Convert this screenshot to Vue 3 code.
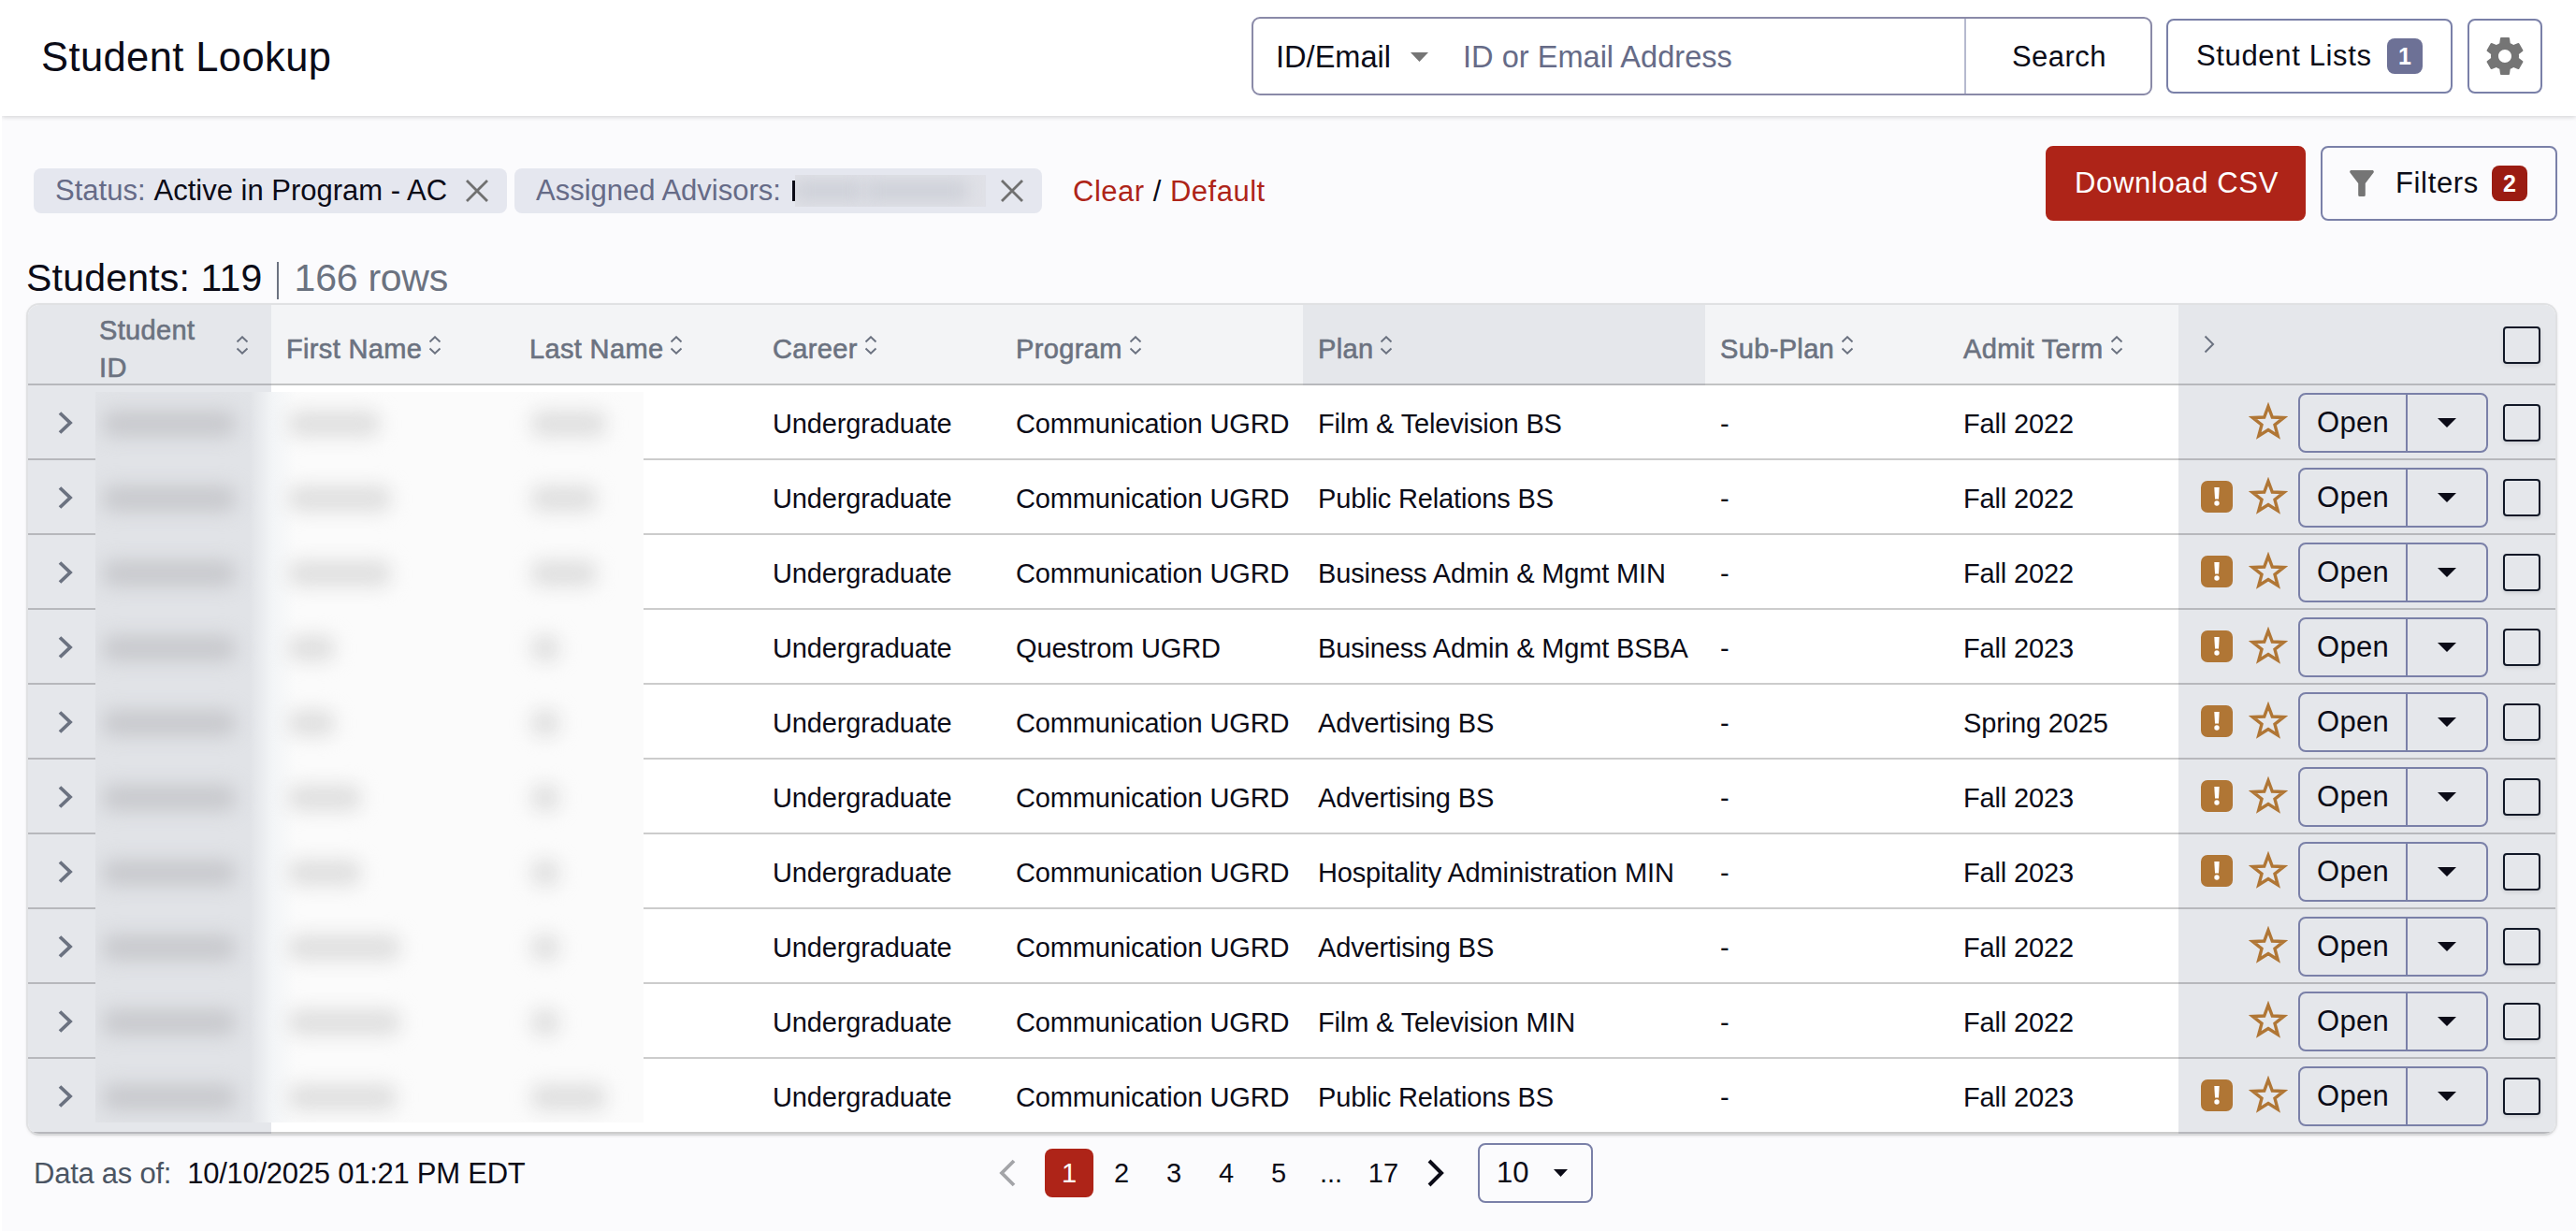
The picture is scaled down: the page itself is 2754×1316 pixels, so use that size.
<script setup>
const columns = [
  { key: 'career', label: 'Career' },
  { key: 'program', label: 'Program' },
  { key: 'plan', label: 'Plan', active: true },
  { key: 'subPlan', label: 'Sub-Plan' },
  { key: 'term', label: 'Admit Term' },
]

const row = (program, plan, term, alert, first, last) => ({
  career: 'Undergraduate', program, plan, subPlan: '-', term, alert, first, last,
})

const COM = 'Communication UGRD'
const rows = [
  row(COM, 'Film & Television BS', 'Fall 2022', false, 98, 80),
  row(COM, 'Public Relations BS', 'Fall 2022', true, 110, 70),
  row(COM, 'Business Admin & Mgmt MIN', 'Fall 2022', true, 110, 70),
  row('Questrom UGRD', 'Business Admin & Mgmt BSBA', 'Fall 2023', true, 50, 30),
  row(COM, 'Advertising BS', 'Spring 2025', true, 50, 30),
  row(COM, 'Advertising BS', 'Fall 2023', true, 78, 30),
  row(COM, 'Hospitality Administration MIN', 'Fall 2023', true, 78, 30),
  row(COM, 'Advertising BS', 'Fall 2022', false, 120, 30),
  row(COM, 'Film & Television MIN', 'Fall 2022', false, 120, 30),
  row(COM, 'Public Relations BS', 'Fall 2023', true, 116, 80),
]

const pages = ['1', '2', '3', '4', '5', '...', '17']
</script>

<template>
  <div class="page">
    <header class="topbar">
      <h1>Student Lookup</h1>
      <div class="search">
        <div class="kind">ID/Email<svg class="tri" width="19" height="10" viewBox="0 0 19 10"><path d="M0 0H19L9.5 10Z" fill="#757575" /></svg></div>
        <div class="field">ID or Email Address</div>
        <div class="go">Search</div>
      </div>
      <button class="btn lists">Student Lists<span class="badge slate">1</span></button>
      <button class="btn gear">
        <svg width="48" height="48" viewBox="0 0 24 24" fill="#757575"><path d="M19.43 12.98c.04-.32.07-.64.07-.98s-.03-.66-.07-.98l2.11-1.65c.19-.15.24-.42.12-.64l-2-3.46c-.12-.22-.39-.3-.61-.22l-2.49 1c-.52-.4-1.08-.73-1.69-.98l-.38-2.65C14.46 2.18 14.25 2 14 2h-4c-.25 0-.46.18-.49.42l-.38 2.65c-.61.25-1.17.59-1.69.98l-2.49-1c-.23-.09-.49 0-.61.22l-2 3.46c-.13.22-.07.49.12.64l2.11 1.65c-.04.32-.07.65-.07.98s.03.66.07.98l-2.11 1.65c-.19.15-.24.42-.12.64l2 3.46c.12.22.39.3.61.22l2.49-1c.52.4 1.08.73 1.69.98l.38 2.65c.03.24.24.42.49.42h4c.25 0 .46-.18.49-.42l.38-2.65c.61-.25 1.17-.59 1.69-.98l2.49 1c.23.09.49 0 .61-.22l2-3.46c.12-.22.07-.49-.12-.64l-2.11-1.65zM12 15.5c-1.93 0-3.5-1.57-3.5-3.5s1.57-3.5 3.5-3.5 3.5 1.57 3.5 3.5-1.57 3.5-3.5 3.5z" /></svg>
      </button>
    </header>

    <section class="filters">
      <div class="chip first"><span class="dim">Status:</span><span>Active in Program - AC</span>
        <svg class="x" width="26" height="26" viewBox="0 0 26 26"><path d="M2 2L24 24M24 2L2 24" stroke="#707070" stroke-width="2.8" fill="none" /></svg>
      </div>
      <div class="chip second"><span class="dim">Assigned Advisors:</span><span class="bar"></span><span class="hidden-name"><i></i><i></i></span>
        <svg class="x" width="26" height="26" viewBox="0 0 26 26"><path d="M2 2L24 24M24 2L2 24" stroke="#707070" stroke-width="2.8" fill="none" /></svg>
      </div>
      <div class="links"><a>Clear</a> / <a>Default</a></div>
      <button class="btn primary">Download CSV</button>
      <button class="btn filter">
        <svg width="26" height="28" viewBox="0 0 26 28"><path d="M1.2 0H24.8Q26.4 .9 25.6 2.6L16.8 14V26.4Q16.8 28 15.2 28H10.8Q9.2 28 9.2 26.4V14L.4 2.6Q-.4 .9 1.2 0Z" fill="#757575" /></svg>
        Filters<span class="badge red">2</span>
      </button>
    </section>

    <div class="summary">Students: 119<span class="rule"></span><span class="count">166 rows</span></div>

    <div class="table">
      <div class="tr head">
        <div class="cell gray sid">
          <span>Student<br>ID</span>
          <svg class="sort" width="14" height="20" viewBox="0 0 14 20"><path d="M1.5 6.5L7 1.2L12.5 6.5M1.5 13.5L7 18.8L12.5 13.5" /></svg>
        </div>
        <div class="cell" v-for="label in ['First Name', 'Last Name']" :key="label">
          <span>{{ label }}</span>
          <svg class="sort" width="14" height="20" viewBox="0 0 14 20"><path d="M1.5 6.5L7 1.2L12.5 6.5M1.5 13.5L7 18.8L12.5 13.5" /></svg>
        </div>
        <div class="cell" :class="{ gray: c.active }" v-for="c in columns" :key="c.key">
          <span>{{ c.label }}</span>
          <svg class="sort" width="14" height="20" viewBox="0 0 14 20"><path d="M1.5 6.5L7 1.2L12.5 6.5M1.5 13.5L7 18.8L12.5 13.5" /></svg>
        </div>
        <div class="cell gray actions">
          <svg class="collapse" width="12" height="20" viewBox="0 0 12 20"><path d="M1.5 1.5L10 10L1.5 18.5" stroke="#6b7280" stroke-width="2" fill="none" /></svg>
          <span class="check"></span>
        </div>
      </div>

      <div class="tr" v-for="(r, i) in rows" :key="i">
        <div class="cell gray expand">
          <svg width="18" height="26" viewBox="0 0 18 26"><path d="M3 2.5L14 13L3 23.5" stroke="#6b7280" stroke-width="3.8" fill="none" /></svg>
        </div>
        <div class="cell"></div>
        <div class="cell"></div>
        <div class="cell" v-for="c in columns" :key="c.key">{{ r[c.key] }}</div>
        <div class="cell gray actions">
          <span class="alert" :class="{ off: !r.alert }">
            <svg width="8" height="20" viewBox="0 0 8 20" fill="#fff"><path d="M1.3 0H6.7L6 12.5H2Z" /><circle cx="4" cy="17" r="2.7" /></svg>
          </span>
          <svg class="star" width="42" height="42" viewBox="0 0 42 42"><path d="M21 4.5L25.3 16L37.5 16.6L28 24.2L31.2 36L21 29.5L10.8 36L14 24.2L4.5 16.6L16.7 16Z" fill="none" stroke="#b07635" stroke-width="3.4" /></svg>
          <span class="split"><b>Open</b><span><svg width="20" height="10" viewBox="0 0 20 10"><path d="M0 0H20L10 10Z" fill="#0b0b17" /></svg></span></span>
          <span class="check"></span>
        </div>
      </div>

      <div class="redacted">
        <div class="smear">
          <div class="smear-row" v-for="(r, i) in rows" :key="i">
            <i class="id"></i>
            <i class="fn" :style="{ width: r.first + 'px' }"></i>
            <i class="ln" :style="{ width: r.last + 'px' }"></i>
          </div>
        </div>
      </div>
    </div>

    <footer class="foot">
      <div class="asof"><span>Data as of:</span>10/10/2025 01:21 PM EDT</div>
      <nav class="pager">
        <span class="prev"><svg width="20" height="32" viewBox="0 0 20 32"><path d="M17 3L4 16L17 29" stroke="#a3a4a8" stroke-width="3.8" fill="none" /></svg></span>
        <span v-for="p in pages" :key="p" :class="{ current: p === '1' }">{{ p }}</span>
        <span><svg width="20" height="32" viewBox="0 0 20 32"><path d="M3 3L16 16L3 29" stroke="#0b0b17" stroke-width="4" fill="none" /></svg></span>
      </nav>
      <div class="size">10<svg width="15" height="8" viewBox="0 0 15 8"><path d="M0 0H15L7.5 8Z" fill="#0b0b17" /></svg></div>
    </footer>
  </div>
</template>

<style>
body { background: #fbfbfd; }
</style>

<style scoped>
.page, .page * { box-sizing: border-box; }
.page {
  width: 2754px; height: 1316px; overflow: hidden;
  background: #fbfbfd; border-left: 2px solid #fff;
  color: #0b0b17; white-space: nowrap;
  font: 31px/1.2 "Liberation Sans", Arial, Helvetica, sans-serif;
}
.topbar {
  height: 124px; display: flex; align-items: center; padding: 0 36px 4px 42px;
  background: #fff; box-shadow: 0 1px 5px rgba(0, 0, 0, .18); position: relative;
}
h1 { margin: 0 auto 0 0; padding-top: 3px; font-size: 43.5px; font-weight: 400; letter-spacing: .4px; }
.search {
  display: flex; width: 963px; height: 84px; margin-right: 15px;
  border: 2px solid #8a8aa8; border-radius: 9px; font-size: 32.6px;
}
.kind { width: 210px; padding: 1px 0 0 24px; display: flex; align-items: center; }
.tri { margin-left: 21px; }
.field { flex: 1; padding: 1px 0 0 14px; display: flex; align-items: center; color: #666b87; }
.go {
  width: 199px; border-left: 2px solid #b6b9cf; display: flex; align-items: center;
  justify-content: center; padding: 1px 0 0 2px; font-size: 31px; letter-spacing: .5px;
}
.btn {
  height: 80px; display: flex; align-items: center; padding: 0; background: none;
  border: 2px solid #7a80a8; border-radius: 8px; color: #0b0b17;
  font: inherit; letter-spacing: .65px; flex: none;
}
.lists { width: 306px; padding-left: 30px; margin-right: 16px; }
.gear { width: 80px; justify-content: center; }
.badge {
  width: 38px; height: 38px; border-radius: 8px; color: #fff; font-size: 25px; font-weight: 700;
  display: flex; align-items: center; justify-content: center; letter-spacing: 0; margin: 0 30px 0 auto;
}
.slate { background: #6d7196; }
.red { background: #9b1c12; }

.filters { display: flex; align-items: center; height: 80px; margin-top: 32px; padding: 0 20px 0 34px; }
.chip { height: 48px; border-radius: 8px; background: #e5e7ef; display: flex; align-items: center; padding-left: 23px; margin: 16px 8px 0 0; }
.chip.first { width: 506px; }
.chip.second { width: 564px; }
.chip .x { margin-left: auto; margin-right: 19px; }
.dim { color: #666b87; margin-right: 9px; }
.bar { width: 3px; height: 22px; background: #0b0b17; margin-left: 3px; }
.hidden-name { width: 204px; height: 34px; background: #e0e1e7; overflow: hidden; display: flex; gap: 4px; align-items: center; }
.hidden-name i { height: 20px; width: 72px; background: #cccfd7; filter: blur(9px); }
.hidden-name i + i { width: 108px; }
.links { margin: 18px auto 0 25px; letter-spacing: .5px; }
.links a { color: #ae2418; }
.primary { width: 278px; background: #ae2418; border-color: #ae2418; color: #fff; justify-content: center; padding-left: 2px; margin-right: 16px; }
.filter { width: 253px; padding-left: 29px; }
.filter svg { margin-right: 23px; }

.summary { display: flex; align-items: center; height: 48px; margin: 37px 0 3px 26px; padding-top: 1px; font-size: 41px; letter-spacing: .2px; }
.rule { width: 2px; height: 40px; margin: 5px 17px 0 15px; background: #6b7280; }
.count { color: #6b7280; letter-spacing: -.25px; }

.table {
  position: relative; width: 2706px; margin-left: 26px; font-size: 29px; letter-spacing: -.15px;
  border: 2px solid #e0e1e3; border-bottom-color: #d8d9db; border-radius: 14px;
  background: #fff; overflow: hidden; box-shadow: 0 1px 3px rgba(0, 0, 0, .08);
}
.tr {
  height: 80px; display: grid; grid-template-rows: 100%;
  grid-template-columns: 260px 260px 260px 260px 323px 430px 260px 246px 403px;
}
.cell { border-bottom: 2px solid rgba(0, 0, 0, .2); padding: 4px 0 0 16px; display: flex; align-items: center; }
.gray { background-color: #e5e7eb; }
.head { height: 86px; background: #f3f4f6; color: #6b7280; letter-spacing: .35px; line-height: 40px; -webkit-text-stroke: .6px #6b7280; }
.head .cell { padding-top: 9px; }
.sort { margin: -8px 0 0 7px; fill: none; stroke: #6b7280; stroke-width: 1.9; }
.head .sid { padding-left: 76px; }
.sid .sort { margin-left: auto; margin-right: 24px; }
.cell.expand { padding: 2px 0 0 31px; }
.head .cell.actions { padding: 0 16px 0 27px; }
.cell.actions { padding: 0 16px 0 24px; }
.check { margin-left: auto; width: 40px; height: 40px; border: 2px solid #111827; border-radius: 4px; box-shadow: 0 2px 4px rgba(0, 0, 0, .1); position: relative; top: 1px; }
.alert { width: 34px; height: 34px; border-radius: 7px; background: #b07635; display: flex; align-items: center; justify-content: center; }
.off { visibility: hidden; }
.star { margin-left: 17px; }
.split { width: 203px; height: 64px; margin: 2px 0 0 11px; display: flex; border: 2px solid #7a80a8; border-radius: 8px; font-size: 31px; letter-spacing: .3px; }
.split b { width: 115px; font-weight: 400; border-right: 2px solid #7a80a8; display: flex; align-items: center; justify-content: center; }
.split > span { flex: 1; display: flex; align-items: center; justify-content: center; }

.redacted { position: absolute; left: 72px; top: 93px; width: 586px; height: 781px; overflow: hidden; background: linear-gradient(90deg, #e1e3e7 165px, #f3f5f7 190px, #fbfbfb 215px); }
.smear { padding-top: 14px; filter: blur(10px); }
.smear-row { height: 80px; display: grid; grid-template-columns: 198px 260px 1fr; padding: 6px 0 0 8px; }
.smear-row i { height: 28px; border-radius: 10px; }
.smear-row .id { width: 142px; background: #c8c9cd; }
.fn, .ln { background: #dfdfdf; }

.foot { display: flex; align-items: center; height: 64px; margin-top: 8px; padding-left: 34px; }
.asof { width: 1015px; padding-top: 1px; letter-spacing: -.25px; }
.asof span { color: #4b5563; margin-right: 17px; }
.pager { display: flex; gap: 4px; font-size: 29px; }
.pager span { width: 52px; height: 52px; display: flex; align-items: center; justify-content: center; border-radius: 8px; }
.pager .prev { margin-right: 10px; }
.pager .current { background: #ae2418; color: #fff; }
.size { width: 123px; height: 64px; margin-left: 19px; border: 2px solid #7a80a8; border-radius: 8px; display: flex; align-items: center; padding-left: 18px; }
.size svg { margin-left: 27px; }
</style>
